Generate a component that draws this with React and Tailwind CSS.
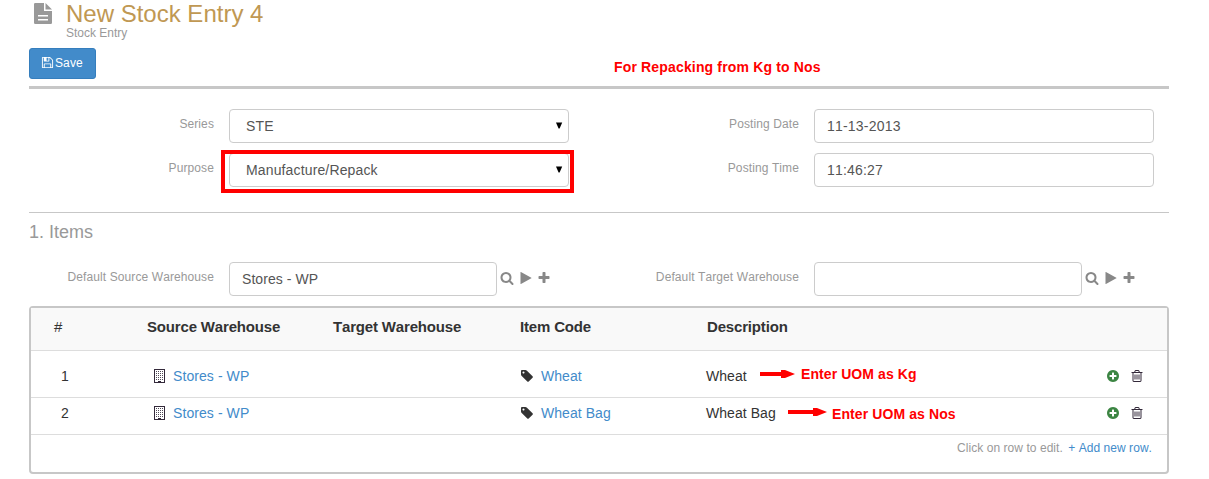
const paths = {
  save: "M512 1536h768v-384h-768v384zm896 0h128v-896q0-14-10-38.5t-20-34.5l-281-281q-10-10-34-20t-39-10v416q0 40-28 68t-68 28h-576q-40 0-68-28t-28-68v-416h-128v1280h128v-416q0-40 28-68t68-28h832q40 0 68 28t28 68v416zm-384-928v-320q0-13-9.5-22.5t-22.5-9.5h-192q-13 0-22.5 9.5t-9.5 22.5v320q0 13 9.5 22.5t22.5 9.5h192q13 0 22.5-9.5t9.5-22.5zm640 32v928q0 40-28 68t-68 28h-1344q-40 0-68-28t-28-68v-1344q0-40 28-68t68-28h928q40 0 88 20t76 48l280 280q28 28 48 76t20 88z",
  trash: "M704 736v576q0 14-9 23t-23 9h-64q-14 0-23-9t-9-23v-576q0-14 9-23t23-9h64q14 0 23 9t9 23zm256 0v576q0 14-9 23t-23 9h-64q-14 0-23-9t-9-23v-576q0-14 9-23t23-9h64q14 0 23 9t9 23zm256 0v576q0 14-9 23t-23 9h-64q-14 0-23-9t-9-23v-576q0-14 9-23t23-9h64q14 0 23 9t9 23zm128 724v-948h-896v948q0 22 7 40.5t14.5 27 10.5 8.5h832q3 0 10.5-8.5t14.5-27 7-40.5zm-672-1076h448l-48-117q-7-9-17-11h-317q-10 2-17 11zm928 32v64q0 14-9 23t-23 9h-96v948q0 83-47 143.5t-113 60.5h-832q-66 0-113-58.5t-47-141.5v-952h-96q-14 0-23-9t-9-23v-64q0-14 9-23t23-9h309l70-167q15-37 54-63t79-26h320q40 0 79 26t54 63l70 167h309q14 0 23 9t9 23z",
  plusCircle: "M1344 960v-128q0-26-19-45t-45-19h-256v-256q0-26-19-45t-45-19h-128q-26 0-45 19t-19 45v256h-256q-26 0-45 19t-19 45v128q0 26 19 45t45 19h256v256q0 26 19 45t45 19h128q26 0 45-19t19-45v-256h256q26 0 45-19t19-45zm320-64q0 209-103 385.5t-279.5 279.5-385.5 103-385.5-103-279.5-279.5-103-385.5 103-385.5 279.5-279.5 385.5-103 385.5 103 279.5 279.5 103 385.5z",
  search: "M1216 832q0-185-131.5-316.5t-316.5-131.5-316.5 131.5-131.5 316.5 131.5 316.5 316.5 131.5 316.5-131.5 131.5-316.5zm512 832q0 52-38 90t-90 38q-54 0-90-38l-343-342q-179 124-399 124-143 0-273.5-55.5t-225-150-150-225-55.5-273.5 55.5-273.5 150-225 225-150 273.5-55.5 273.5 55.5 225 150 150 225 55.5 273.5q0 220-124 399l343 343q37 37 37 90z",
  play: "M1576 927l-1328 738q-23 13-39.5 3t-16.5-36v-1472q0-26 16.5-36t39.5 3l1328 738q23 13 23 31t-23 31z",
  plus: "M1600 736v192q0 40-28 68t-68 28h-416v416q0 40-28 68t-68 28h-192q-40 0-68-28t-28-68v-416h-416q-40 0-68-28t-28-68v-192q0-40 28-68t68-28h416v-416q0-40 28-68t68-28h192q40 0 68 28t28 68v416h416q40 0 68 28t28 68z",
  tag: "M576 448q0-53-37.5-90.5t-90.5-37.5-90.5 37.5-37.5 90.5 37.5 90.5 90.5 37.5 90.5-37.5 37.5-90.5zm1067 576q0 53-37 90l-491 492q-39 37-91 37-53 0-90-37l-715-716q-38-37-64.5-101t-26.5-117v-416q0-52 38-90t90-38h416q53 0 117 26.5t102 64.5l715 714q37 39 37 91z",
};

function Icon({ name, className }) {
  return (
    <svg viewBox="0 0 1792 1792" fill="currentColor" className={`shrink-0 ${className}`}>
      <path d={paths[name]} />
    </svg>
  );
}

function FileIcon() {
  return (
    <svg viewBox="0 0 18 21" className="h-[21px] w-[18px] shrink-0" fill="#999">
      <path fillRule="evenodd" d="M1.2 0H10v8h8v11.8q0 1.2-1.2 1.2H1.2Q0 21 0 19.800V1.200Q0 0 1.200 0zM4 12v1.600h10V12zM4 16v1.600h10V16z" />
      <path d="M11.500 0L18 6.500H11.500z" />
    </svg>
  );
}

function Building() {
  const cells = [];
  for (let y = 2; y < 11; y += 2) for (let x = 2; x < 9; x += 2) cells.push([x, y]);
  return (
    <svg viewBox="0 0 11 14" className="h-[14px] w-[11px] shrink-0" fill="#33293a">
      <path fillRule="evenodd" d="M0 0h11v14H0zM1 1v12h9V1z" />
      <path d="M4 12h3v1H4z" />
      {cells.map(([x, y]) => (
        <rect key={`${x}-${y}`} x={x} y={y} width="1" height="1" opacity=".85" />
      ))}
    </svg>
  );
}

function Arrow({ className, shaft }) {
  return (
    <svg className={`h-[9px] w-[40px] ${className}`} fill="#f00">
      <rect x="0" y="2" width={shaft} height="4" />
      <path transform={`translate(${shaft} 0)`} d="M-1 0H3L13 4L3 8H-1z" />
    </svg>
  );
}

function Field({ label, children }) {
  return (
    <div className="flex items-start">
      <label className="mr-[15px] w-[185px] pt-[7px] text-right text-xs leading-4 tracking-[0.1px] text-[#999]">{label}</label>
      {children}
    </div>
  );
}

const box = "flex h-[34px] items-center rounded border border-[#ccc] bg-white text-sm text-[#555]";

function Select({ value }) {
  return (
    <div className={`${box} w-[340px] justify-between pl-4 pr-[5px] tracking-[0.14px]`}>
      {value}
      <svg viewBox="0 0 8 7" className="mb-px h-[7px] w-[8px]" fill="#000">
        <path d="M1 .5h6.200L4.600 6.500H3.600z" />
      </svg>
    </div>
  );
}

function LinkField({ value }) {
  return (
    <div className="flex items-center text-[#888]">
      <div className={`${box} w-[268px] px-3 tracking-[0.06px]`}>{value}</div>
      <Icon name="search" className="mb-[2px] ml-[2.5px] size-[14px]" />
      <Icon name="play" className="mb-[2px] ml-[5px] size-[14px]" />
      <Icon name="plus" className="mb-[2px] ml-[4px] size-[14px]" />
    </div>
  );
}

function Row({ idx, item, className }) {
  return (
    <div className={`flex items-center border-b border-[#ddd] text-sm tracking-[0.05px] text-[#333] ${className}`}>
      <div className="w-[123px] pl-[30px]">{idx}</div>
      <div className="flex w-[366px] items-center gap-2 tracking-[0.08px] text-[#428bca]">
        <Building />
        Stores - WP
      </div>
      <div className="flex w-[186px] items-center text-[#428bca]">
        <Icon name="tag" className="mr-[7px] size-[14px] text-[#333]" />
        {item}
      </div>
      <div className="flex-1">{item}</div>
      <Icon name="plusCircle" className="mr-[10px] size-[14px] text-[#3c8543]" />
      <Icon name="trash" className="mr-[23px] size-[14px] text-[#33293a]" />
    </div>
  );
}

export default function App() {
  return (
    <div className="relative h-[479px] w-[1209px] overflow-hidden bg-white pl-[29px] font-['Liberation_Sans',sans-serif] [font-kerning:none]">
      <div className="w-[1140px]">
        <header className="h-[89px] border-b-[3px] border-[#c7c7c7]">
          <div className="flex h-12 pl-[5px] pt-[3px]">
            <FileIcon />
            <div className="ml-[14px] -mt-[3px]">
              <h1 className="text-2xl leading-[27px] text-[#c09853]">New Stock Entry 4</h1>
              <p className="-mt-[2px] text-xs leading-4 text-[#999]">Stock Entry</p>
            </div>
          </div>
          <div className="flex items-start">
            <button className="flex h-[31px] w-[67px] items-center rounded-[3px] border border-[#357ebd] bg-[#428bca] pb-[2px] pl-[11px] text-xs tracking-[0.1px] text-white">
              <Icon name="save" className="mr-[1px] size-[13px]" />
              Save
            </button>
            <p className="ml-[518px] pt-[9px] text-sm font-bold tracking-[0.16px] text-[#f00]">For Repacking from Kg to Nos</p>
          </div>
        </header>
        <section className="grid h-[124px] grid-cols-[585px_555px] content-start gap-y-[10px] border-b border-[#c7c7c7] pt-5">
          <Field label="Series"><Select value="STE" /></Field>
          <Field label="Posting Date"><div className={`${box} w-[340px] px-3 tracking-[0.2px]`}>11-13-2013</div></Field>
          <Field label="Purpose"><Select value="Manufacture/Repack" /></Field>
          <Field label="Posting Time"><div className={`${box} w-[340px] px-3 tracking-[0.2px]`}>11:46:27</div></Field>
        </section>
        <section>
          <h2 className="h-[49px] pt-[5px] text-lg text-[#999]">1. Items</h2>
          <div className="grid h-[44px] grid-cols-[585px_555px]">
            <Field label="Default Source Warehouse"><LinkField value="Stores - WP" /></Field>
            <Field label="Default Target Warehouse"><LinkField value="" /></Field>
          </div>
          <div className="h-[168px] rounded border-2 border-[#c7c7c7]">
            <div className="flex h-[43px] border-b border-[#ddd] bg-[#f9f9f9] pt-[8px] text-[15px] leading-[22px] font-bold tracking-[-0.17px] text-[#333]">
              <div className="w-[116px] pl-[23px] font-normal">#</div>
              <div className="w-[186px]">Source Warehouse</div>
              <div className="w-[187px]">Target Warehouse</div>
              <div className="w-[187px]">Item Code</div>
              <div>Description</div>
            </div>
            <Row idx="1" item="Wheat" className="h-[47px] pt-[4px]" />
            <Row idx="2" item="Wheat Bag" className="h-[37px] pb-[6px]" />
            <p className="pr-[15px] pt-[5px] text-right text-xs tracking-[0.05px] text-[#999]">
              Click on row to edit. <span className="ml-[2px] text-[#428bca]">+ Add new row.</span>
            </p>
          </div>
        </section>
      </div>
      <div className="absolute left-[221px] top-[150px] h-[43px] w-[353px] border-4 border-[#f00]" />
      <Arrow shaft={22} className="absolute left-[760px] top-[370px]" />
      <p className="absolute left-[801px] top-[364px] text-sm font-bold tracking-[0.08px] text-[#f00]">Enter UOM as Kg</p>
      <Arrow shaft={26} className="absolute left-[788px] top-[408px]" />
      <p className="absolute left-[832px] top-[404px] text-sm font-bold tracking-[0.1px] text-[#f00]">Enter UOM as Nos</p>
    </div>
  );
}
